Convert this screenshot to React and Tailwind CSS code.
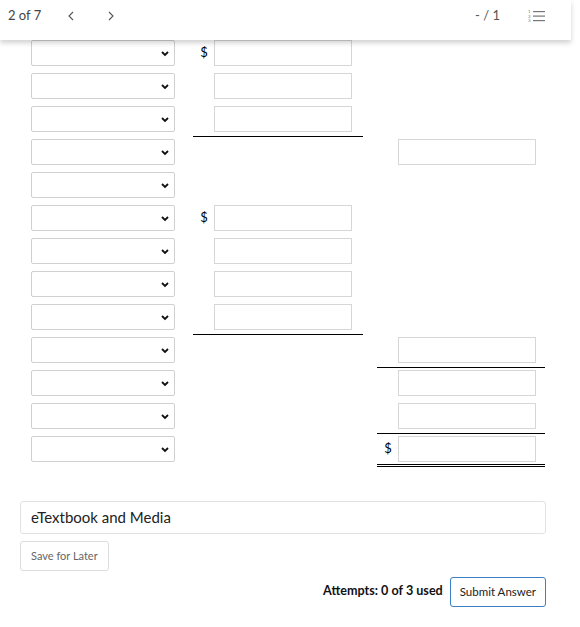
import React from "react";

const Chevron = () => (
  <svg width="8" height="6" viewBox="0 0 8 6" className="absolute right-[5px] top-[10px]">
    <path d="M1 1 L4 4 L7 1" fill="none" stroke="#111" strokeWidth="1.8" />
  </svg>
);

const Select = () => (
  <div className="relative w-[144px] h-[26px] border border-[#d0d0d0] rounded-[2px] bg-white">
    <Chevron />
  </div>
);

const Input = () => (
  <div className="w-[138px] h-[26px] border border-[#d6d6d6] bg-white" />
);

const rows = [
  { c2: "$", c3: null },
  { c2: "i", c3: null },
  { c2: "i", c3: null, l2: true },
  { c2: null, c3: "i" },
  { c2: null, c3: null },
  { c2: "$", c3: null },
  { c2: "i", c3: null },
  { c2: "i", c3: null },
  { c2: "i", c3: null, l2: true },
  { c2: null, c3: "i", l3: "single" },
  { c2: null, c3: "i" },
  { c2: null, c3: "i", l3: "single" },
  { c2: null, c3: "$", l3: "double" },
];

const Cell = ({ kind, line }) => {
  const border =
    line === true || line === "single"
      ? "border-b border-black"
      : line === "double"
      ? "border-b-[3px] border-double border-black"
      : "border-b border-transparent";
  return (
    <div className={`flex items-start h-[33px] pt-[2px] ${border}`}>
      <div className="w-[21px] h-[26px] flex items-center justify-center text-[13px] text-black pl-[1px]">
        {kind === "$" ? "$" : ""}
      </div>
      {kind ? <Input /> : null}
    </div>
  );
};

export default function App() {
  return (
    <div
      className="w-[580px] h-[627px] bg-white overflow-hidden relative"
      style={{ fontFamily: "Lato, 'Liberation Sans', sans-serif" }}
    >
      <div className="relative z-10 h-[40px] w-[571px] bg-white shadow-[0_3px_5px_rgba(0,0,0,0.18)] flex items-center text-[13px] text-[#444]">
        <span className="ml-[8px] -mt-[8px]">2 of 7</span>
        <svg width="6" height="10" viewBox="0 0 6 10" className="ml-[27px] -mt-[8px]">
          <path d="M5 1 L1 5 L5 9" fill="none" stroke="#555" strokeWidth="1.1" />
        </svg>
        <svg width="6" height="10" viewBox="0 0 6 10" className="ml-[34px] -mt-[8px]">
          <path d="M1 1 L5 5 L1 9" fill="none" stroke="#555" strokeWidth="1.1" />
        </svg>
        <span className="ml-auto -mt-[8px] text-[#555]">- / 1</span>
        <svg width="18" height="14" viewBox="0 0 18 14" className="ml-[28px] mr-[25px] -mt-[8px]">
          <text x="0" y="4" fontSize="4.5" fill="#777" fontFamily="Lato, sans-serif">1</text>
          <text x="0" y="8.5" fontSize="4.5" fill="#777" fontFamily="Lato, sans-serif">2</text>
          <text x="0" y="13" fontSize="4.5" fill="#777" fontFamily="Lato, sans-serif">3</text>
          <rect x="5" y="2" width="12" height="1.2" fill="#777" />
          <rect x="5" y="6.5" width="12" height="1.2" fill="#777" />
          <rect x="5" y="11" width="12" height="1.2" fill="#777" />
        </svg>
      </div>

      <div className="-mt-[2px] pl-[31px]">
        {rows.map((r, i) => (
          <div key={i} className="flex h-[33px]">
            <div className="pt-[2px] w-[144px]">
              <Select />
            </div>
            <div className="ml-[18px] w-[170px]">
              <Cell kind={r.c2} line={r.l2} />
            </div>
            <div className="ml-[14px] w-[168px]">
              <Cell kind={r.c3} line={r.l3} />
            </div>
          </div>
        ))}
      </div>

      <div className="pl-[20px] w-[546px]">
        <div className="mt-[34px] h-[33px] border border-[#e2e2e2] rounded-[3px] flex items-center pl-[10px] text-[15px] text-[#222]">
          eTextbook and Media
        </div>
        <button className="mt-[7px] h-[30px] px-[10px] border border-[#dcdcdc] rounded-[3px] text-[11px] text-[#666] bg-white">
          Save for Later
        </button>
        <div className="flex justify-end items-center mt-[6px]">
          <span className="text-[12.6px] font-bold text-[#111] -mt-[2px]">Attempts: 0 of 3 used</span>
          <button className="ml-[7px] h-[30px] px-[9px] border border-[#3b7fc4] rounded-[3px] text-[11.5px] text-[#222] bg-white">
            Submit Answer
          </button>
        </div>
      </div>
    </div>
  );
}
